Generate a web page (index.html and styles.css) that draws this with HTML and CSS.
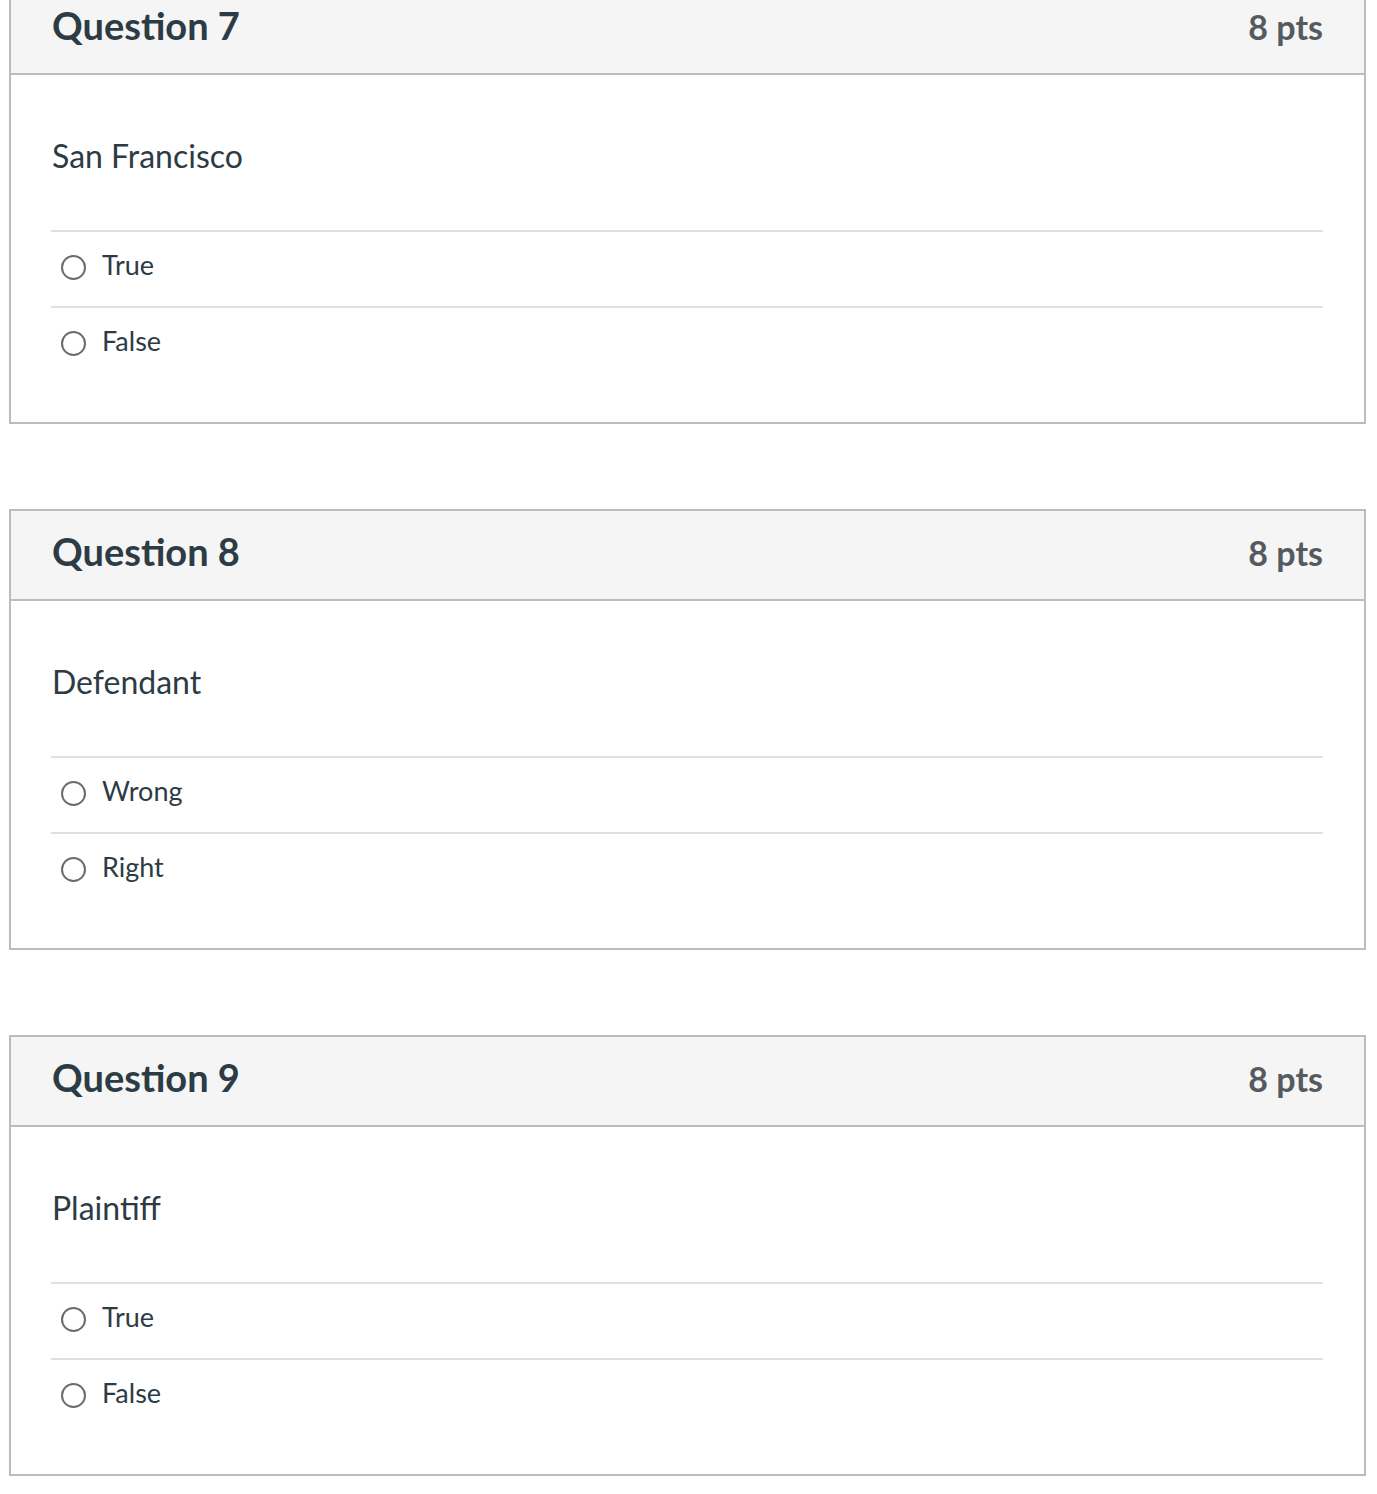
FILE: index.html
```html
<!DOCTYPE html>
<html lang="en">
<head>
<meta charset="utf-8">
<title>Quiz</title>
<link rel="stylesheet" href="styles.css">
</head>
<body>
<main class="quiz">
  <section class="question">
    <header class="q-header">
      <h2 class="q-name">Question 7</h2>
      <span class="q-points">8 pts</span>
    </header>
    <div class="q-body">
      <p class="q-text">San Francisco</p>
      <div class="answers">
        <label class="answer"><span class="radio"></span><span class="answer-text">True</span></label>
        <label class="answer"><span class="radio"></span><span class="answer-text">False</span></label>
      </div>
    </div>
  </section>
  <section class="question">
    <header class="q-header">
      <h2 class="q-name">Question 8</h2>
      <span class="q-points">8 pts</span>
    </header>
    <div class="q-body">
      <p class="q-text">Defendant</p>
      <div class="answers">
        <label class="answer"><span class="radio"></span><span class="answer-text">Wrong</span></label>
        <label class="answer"><span class="radio"></span><span class="answer-text">Right</span></label>
      </div>
    </div>
  </section>
  <section class="question">
    <header class="q-header">
      <h2 class="q-name">Question 9</h2>
      <span class="q-points">8 pts</span>
    </header>
    <div class="q-body">
      <p class="q-text">Plaintiff</p>
      <div class="answers">
        <label class="answer"><span class="radio"></span><span class="answer-text">True</span></label>
        <label class="answer"><span class="radio"></span><span class="answer-text">False</span></label>
      </div>
    </div>
  </section>
</main>
</body>
</html>
```

FILE: styles.css
```css
html, body {
  margin: 0;
  padding: 0;
  background: #ffffff;
}

body {
  font-family: Lato, "Open Sans", "Liberation Sans", sans-serif;
  color: #2d3b45;
  overflow: hidden;
}

.quiz {
  width: 1357px;
  margin-left: 9px;
  margin-top: -17px;
  display: flex;
  flex-direction: column;
  gap: 85px;
}

.question {
  border: 2px solid #bcbcbc;
  background: #ffffff;
}

.q-header {
  box-sizing: border-box;
  height: 90px;
  padding: 18px 41px 0 41px;
  background: #f5f5f5;
  border-bottom: 2px solid #bcbcbc;
  display: flex;
  justify-content: space-between;
  align-items: baseline;
}

.q-name {
  margin: 0;
  font-size: 38px;
  line-height: 1.2;
  font-weight: 700;
  color: #2d3b45;
}

.q-points {
  font-size: 34px;
  line-height: 1.2;
  font-weight: 700;
  color: #555a5e;
}

.q-body {
  padding: 57px 41px 40px 40px;
}

.q-text {
  margin: 0 0 50px 1px;
  font-size: 32px;
  line-height: 48px;
}

.answers {
  display: flex;
  flex-direction: column;
}

.answer {
  box-sizing: border-box;
  height: 76px;
  padding: 13px 0 0 10px;
  border-top: 2px solid #e0e0e0;
  display: flex;
  align-items: flex-start;
  gap: 16px;
}

.radio {
  box-sizing: border-box;
  flex: 0 0 25px;
  width: 25px;
  height: 25px;
  margin-top: 10px;
  border: 2px solid #6b6b6b;
  border-radius: 50%;
  background: #ffffff;
}

.answer-text {
  font-size: 27px;
  line-height: 40px;
  color: #2d3b45;
}
```
